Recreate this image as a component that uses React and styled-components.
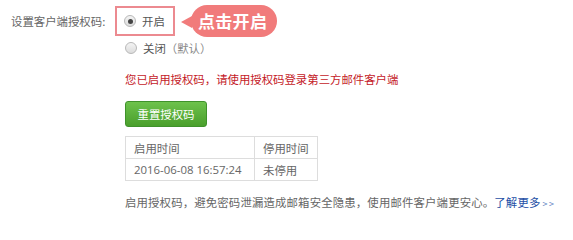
import React from 'react'
import styled, { createGlobalStyle } from 'styled-components'

const GlobalStyle = createGlobalStyle`
  html, body {
    margin: 0;
    padding: 0;
    background: #fff;
  }
  body {
    font-family: "Noto Sans CJK SC", "Open Sans", sans-serif;
    font-size: 11.4px;
    color: #666;
  }
`

const Page = styled.div`
  display: grid;
  grid-template-columns: 125px auto;
  padding-top: 5px;
  width: 573px;
  height: 223px;
  box-sizing: border-box;
`

const Label = styled.div`
  padding-left: 11px;
  line-height: 17px;
  padding-top: 8px;
  color: #666;
  white-space: nowrap;
`

const Content = styled.div`
  display: flex;
  flex-direction: column;
  align-items: flex-start;
`

const OptionRow = styled.div`
  display: flex;
  align-items: center;
`

const Highlight = styled.div`
  display: flex;
  align-items: center;
  margin-left: -10px;
  width: 60px;
  height: 30px;
  box-sizing: border-box;
  border: 2px solid #ec8a90;
  padding-left: 7px;
`

const Option = styled.label`
  display: flex;
  align-items: center;
  gap: 6px;
  height: 17px;
  color: #555;
  white-space: nowrap;
`

const Radio = styled.span`
  width: 12px;
  height: 12px;
  box-sizing: border-box;
  border-radius: 50%;
  border: 1px solid #b8b8b8;
  background: linear-gradient(#f4f4f4, #dcdcdc);
  display: flex;
  align-items: center;
  justify-content: center;
  &::after {
    content: "";
    width: 5px;
    height: 5px;
    border-radius: 50%;
    background: ${({ checked }) => (checked ? '#444' : 'transparent')};
  }
`

const Bubble = styled.div`
  position: relative;
  margin-left: 16px;
  height: 32px;
  padding: 0 10px 0 7px;
  border-radius: 16px;
  background: #f17b7b;
  color: #fff;
  font-size: 17px;
  font-weight: 700;
  line-height: 32px;
  letter-spacing: 0.3px;
  &::before {
    content: "";
    position: absolute;
    left: -10px;
    top: 11px;
    border-style: solid;
    border-width: 6px 11px 6px 0;
    border-color: transparent #f17b7b transparent transparent;
  }
`

const SecondOption = styled.div`
  margin-top: 2px;
  height: 17px;
  display: flex;
  align-items: center;
`

const Muted = styled.span`
  color: #888;
`

const Notice = styled.div`
  margin-top: 15px;
  color: #c41a28;
  line-height: 17px;
  white-space: nowrap;
`

const Button = styled.button`
  margin-top: 13px;
  width: 82px;
  height: 26px;
  padding: 0;
  border: 1px solid #3f922b;
  border-radius: 3px;
  background: linear-gradient(#6dc24c, #4a9f2c);
  color: #fff;
  font-family: inherit;
  font-size: 11.4px;
  line-height: 24px;
  cursor: pointer;
`

const Table = styled.table`
  margin-top: 9px;
  border-collapse: collapse;
  color: #666;
`

const Cell = styled.td`
  border: 1px solid #ddd;
  height: 22px;
  padding: 0 0 0 8px;
  box-sizing: border-box;
  width: ${({ w }) => w}px;
  white-space: nowrap;
  font-family: "Open Sans", "Noto Sans CJK SC", sans-serif;
  font-size: 11.4px;
`

const Footer = styled.div`
  margin-top: 13px;
  line-height: 17px;
  color: #666;
  white-space: nowrap;
  letter-spacing: 0.15px;
`

const More = styled.a`
  color: #1e4fa6;
  text-decoration: none;
  span {
    font-size: 9px;
    color: #5b7fbf;
    margin-left: 2px;
    letter-spacing: 1.5px;
  }
`

export default function App() {
  return (
    <>
      <GlobalStyle />
      <Page>
        <Label>设置客户端授权码:</Label>
        <Content>
          <OptionRow>
            <Highlight>
              <Option>
                <Radio checked />
                开启
              </Option>
            </Highlight>
            <Bubble>点击开启</Bubble>
          </OptionRow>
          <SecondOption>
            <Option>
              <Radio />
              <span>
                关闭<Muted>（默认）</Muted>
              </span>
            </Option>
          </SecondOption>
          <Notice>您已启用授权码，请使用授权码登录第三方邮件客户端</Notice>
          <Button>重置授权码</Button>
          <Table>
            <tbody>
              <tr>
                <Cell w={129}>启用时间</Cell>
                <Cell w={63}>停用时间</Cell>
              </tr>
              <tr>
                <Cell w={129}>2016-06-08 16:57:24</Cell>
                <Cell w={63}>未停用</Cell>
              </tr>
            </tbody>
          </Table>
          <Footer>
            启用授权码，避免密码泄漏造成邮箱安全隐患，使用邮件客户端更安心。
            <More href="#">
              了解更多<span>&gt;&gt;</span>
            </More>
          </Footer>
        </Content>
      </Page>
    </>
  )
}
